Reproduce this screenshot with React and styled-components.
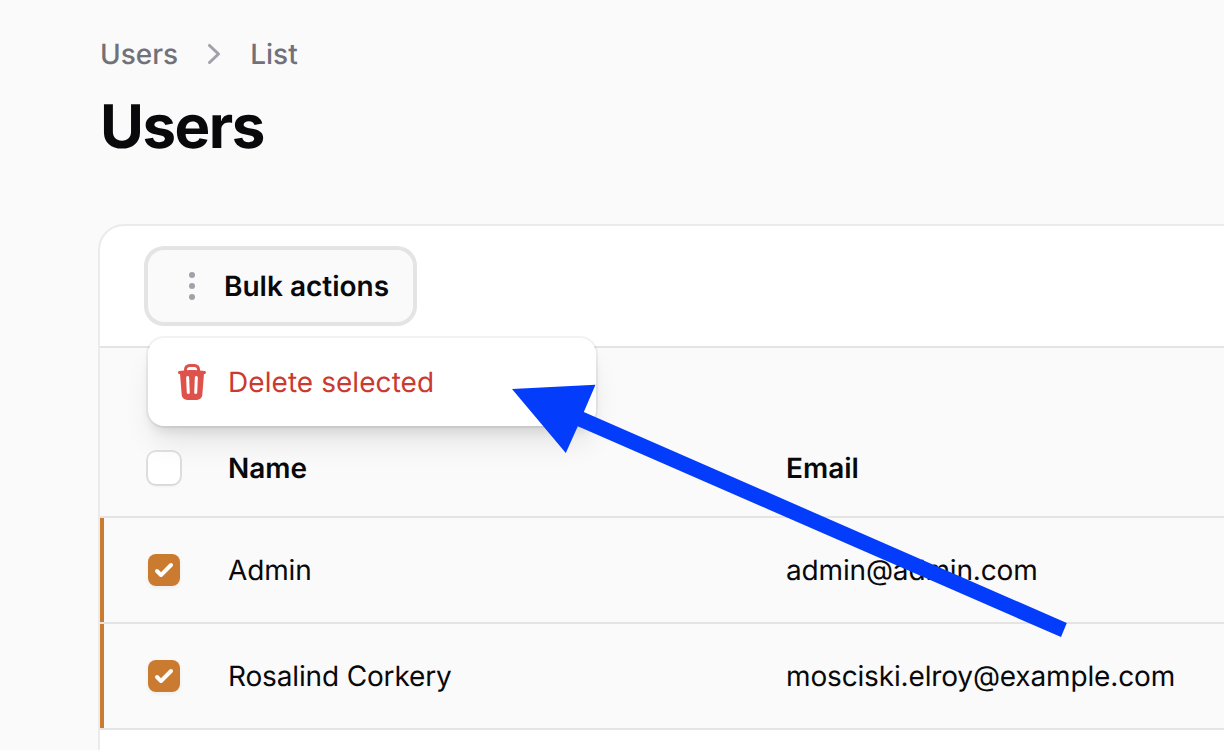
import React from "react";
import styled, { createGlobalStyle } from "styled-components";

const GlobalStyle = createGlobalStyle`
  * { box-sizing: border-box; }
  html, body { margin: 0; height: 100%; overflow: hidden; background: #fafafa; }
  body {
    font-family: Inter, "Liberation Sans", sans-serif;
    font-size: 28px;
    line-height: 40px;
    color: #09090b;
    -webkit-font-smoothing: antialiased;
    text-rendering: geometricPrecision;
  }
`;

const Page = styled.main`
  position: relative;
  width: 1224px;
  height: 750px;
  padding: 34px 0 0 98px;
  overflow: hidden;
`;

const Breadcrumbs = styled.nav`
  display: flex;
  align-items: center;
  gap: 16px;
  padding-left: 2px;
  font-weight: 500;
  color: #71717a;
`;

const Icon = styled.svg`
  display: block;
  flex: none;
  width: 40px;
  height: 40px;
  fill: ${(p) => p.$color};
`;

const Title = styled.h1`
  margin: 17px 0 61px;
  padding-left: 2px;
  font-size: 60px;
  line-height: 72px;
  font-weight: 700;
  letter-spacing: -0.025em;
`;

const Card = styled.section`
  width: 1300px;
  height: 700px;
  border: 2px solid #ebebeb;
  border-radius: 26px;
  background: #fff;
  background-clip: padding-box;
`;

const Toolbar = styled.div`
  display: flex;
  align-items: center;
  height: 120px;
  padding: 0 48px;
`;

const Dropdown = styled.div`
  position: relative;
`;

const Button = styled.button`
  display: flex;
  align-items: center;
  gap: 12px;
  height: 72px;
  padding: 0 24px;
  border: 0;
  border-radius: 16px;
  background: #fafafa;
  box-shadow: 0 0 0 4px #e4e4e4, 0 2px 4px 0 rgba(0, 0, 0, 0.05);
  color: inherit;
  font: inherit;
  font-weight: 600;
  text-rendering: inherit;
  white-space: nowrap;
`;

const Menu = styled.div`
  position: absolute;
  z-index: 1;
  top: 88px;
  left: 0;
  width: 448px;
  padding: 8px;
  border-radius: 16px;
  background: #fff;
  box-shadow: 0 0 0 2px rgba(9, 9, 11, 0.05),
    0 20px 30px -6px rgba(0, 0, 0, 0.1), 0 8px 12px -4px rgba(0, 0, 0, 0.1);
`;

const MenuItem = styled.div`
  display: flex;
  align-items: center;
  gap: 16px;
  padding: 16px;
  color: #cb3a31;
  letter-spacing: 0.06px;
`;

const Row = styled.div`
  display: grid;
  grid-template-columns: 80px 558px 1fr;
  align-items: center;
  height: ${(p) => (p.$head ? "170px" : "106px")};
  padding: ${(p) => (p.$head ? "72px 48px 0" : "0 48px")};
  border-top: 2px solid #e4e4e4;
  background: #fafafa;
  font-weight: ${(p) => (p.$head ? 600 : 400)};
  letter-spacing: ${(p) => (p.$head ? "0" : "-0.15px")};
  box-shadow: ${(p) => (p.$selected ? "inset 4px 0 0 #cb7b30" : "none")};
`;

const TableEnd = styled.div`
  border-top: 2px solid #e4e4e4;
`;

const Checkbox = styled.span`
  display: block;
  width: 32px;
  height: 32px;
  border-radius: 8px;
  background: ${(p) => (p.$checked ? "#cb7b30" : "#fff")};
  box-shadow: ${(p) =>
    p.$checked
      ? "0 2px 4px 0 rgba(0, 0, 0, 0.05)"
      : "0 0 0 2px rgba(9, 9, 11, 0.1), 0 2px 4px 0 rgba(0, 0, 0, 0.05)"};

  svg {
    display: block;
    fill: #fff;
  }
`;

const Arrow = styled.svg`
  position: absolute;
  z-index: 2;
  top: 0;
  left: 0;
  pointer-events: none;
`;

const users = [
  { name: "Admin", email: "admin@admin.com" },
  { name: "Rosalind Corkery", email: "mosciski.elroy@example.com" },
];

export default function App() {
  return (
    <Page>
      <GlobalStyle />
      <Breadcrumbs>
        <span>Users</span>
        <Icon viewBox="0 0 20 20" $color="#a1a1aa">
          <path
            fillRule="evenodd"
            d="M7.21 14.77a.75.75 0 01.02-1.06L11.168 10 7.23 6.29a.75.75 0 111.04-1.08l4.5 4.25a.75.75 0 010 1.08l-4.5 4.25a.75.75 0 01-1.06-.02z"
          />
        </Icon>
        <span>List</span>
      </Breadcrumbs>
      <Title>Users</Title>

      <Card>
        <Toolbar>
          <Dropdown>
            <Button type="button">
              <Icon viewBox="0 0 20 20" $color="#a1a1aa">
                <circle cx="10" cy="4.5" r="1.5" />
                <circle cx="10" cy="10" r="1.5" />
                <circle cx="10" cy="15.5" r="1.5" />
              </Icon>
              Bulk actions
            </Button>
            <Menu>
              <MenuItem>
                <Icon viewBox="0 0 20 20" $color="#de524b">
                  <path
                    fillRule="evenodd"
                    d="M8.75 1A2.75 2.75 0 006 3.75v.443c-.795.077-1.584.176-2.365.298a.75.75 0 10.23 1.482l.149-.022.841 10.518A2.75 2.75 0 007.596 19h4.807a2.75 2.75 0 002.742-2.53l.841-10.52.149.023a.75.75 0 00.23-1.482A41.03 41.03 0 0014 4.193V3.75A2.75 2.75 0 0011.25 1h-2.5zM10 4c.84 0 1.673.025 2.5.075V3.75c0-.69-.56-1.25-1.25-1.25h-2.5c-.69 0-1.25.56-1.25 1.25v.325C8.327 4.025 9.16 4 10 4zM8.58 7.72a.75.75 0 00-1.5.06l.3 7.5a.75.75 0 101.5-.06l-.3-7.5zm4.34.06a.75.75 0 10-1.5-.06l-.3 7.5a.75.75 0 101.5.06l.3-7.5z"
                  />
                </Icon>
                Delete selected
              </MenuItem>
            </Menu>
          </Dropdown>
        </Toolbar>

        <Row $head>
          <Checkbox />
          <span>Name</span>
          <span>Email</span>
        </Row>
        {users.map((user) => (
          <Row key={user.email} $selected>
            <Checkbox $checked>
              <svg viewBox="0 0 16 16">
                <path d="M12.207 4.793a1 1 0 010 1.414l-5 5a1 1 0 01-1.414 0l-2-2a1 1 0 011.414-1.414L6.5 9.086l4.293-4.293a1 1 0 011.414 0z" />
              </svg>
            </Checkbox>
            <span>{user.name}</span>
            <span>{user.email}</span>
          </Row>
        ))}
        <TableEnd />
      </Card>

      <Arrow width="1224" height="750" viewBox="0 0 1224 750">
        <polygon
          fill="#033dfb"
          points="512,389 595.5,384.7 583.8,412 1066.8,623 1061,637 577.8,426.3 565.8,453"
        />
      </Arrow>
    </Page>
  );
}
